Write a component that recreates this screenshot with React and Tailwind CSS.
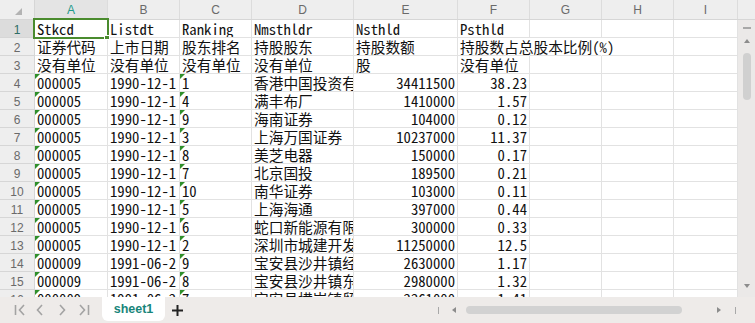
import React from "react";

const cols = [
  { name: "A", w: "w-[73px]" },
  { name: "B", w: "w-[72px]" },
  { name: "C", w: "w-[72px]" },
  { name: "D", w: "w-[102px]" },
  { name: "E", w: "w-[104px]" },
  { name: "F", w: "w-[72px]" },
  { name: "G", w: "w-[72px]" },
  { name: "H", w: "w-[72px]" },
  { name: "I", w: "w-[64px]" },
];

const rows = [
  ["Stkcd", "Listdt", "Ranking", "Nmsthldr", "Nsthld", "Psthld"],
  ["证券代码", "上市日期", "股东排名", "持股股东", "持股数额", "持股数占总股本比例(%)"],
  ["没有单位", "没有单位", "没有单位", "没有单位", "股", "没有单位"],
  ["000005", "1990-12-1", "1", "香港中国投资有限公司", "34411500", "38.23"],
  ["000005", "1990-12-1", "4", "满丰布厂", "1410000", "1.57"],
  ["000005", "1990-12-1", "9", "海南证券", "104000", "0.12"],
  ["000005", "1990-12-1", "3", "上海万国证券", "10237000", "11.37"],
  ["000005", "1990-12-1", "8", "美芝电器", "150000", "0.17"],
  ["000005", "1990-12-1", "7", "北京国投", "189500", "0.21"],
  ["000005", "1990-12-1", "10", "南华证券", "103000", "0.11"],
  ["000005", "1990-12-1", "5", "上海海通", "397000", "0.44"],
  ["000005", "1990-12-1", "6", "蛇口新能源有限公司", "300000", "0.33"],
  ["000005", "1990-12-1", "2", "深圳市城建开发公司", "11250000", "12.5"],
  ["000009", "1991-06-2", "9", "宝安县沙井镇经济发展公司", "2630000", "1.17"],
  ["000009", "1991-06-2", "8", "宝安县沙井镇东塘村", "2980000", "1.32"],
  ["000009", "1991-06-2", "7", "宝安县横岗镇贸易公司", "2261000", "1.41"],
];

function Cell({ w, text, right, mark, spill, hideRight }) {
  return (
    <div
      className={`relative shrink-0 ${w} h-[18px] border-r border-b border-[#e2e2e2] px-[2px] leading-[17px] whitespace-nowrap ${
        spill ? "overflow-visible" : "overflow-hidden"
      } ${right ? "text-right" : ""} ${hideRight ? "border-r-transparent" : ""}`}
    >
      {mark && (
        <div className="absolute left-0 top-0 w-0 h-0 border-t-[5px] border-r-[5px] border-t-[#2f8f2a] border-r-transparent" />
      )}
      {text}
    </div>
  );
}

function Chevron({ dir, bar, className }) {
  return (
    <svg width="12" height="12" viewBox="0 0 12 12" fill="none" stroke="#a3a3a3" strokeWidth="1.6" className={className}>
      {dir === "left" ? (
        <>
          {bar && <line x1="1.5" y1="1" x2="1.5" y2="11" />}
          <polyline points={bar ? "10,1 5.5,6 10,11" : "8,1 3.5,6 8,11"} />
        </>
      ) : (
        <>
          {bar && <line x1="10.5" y1="1" x2="10.5" y2="11" />}
          <polyline points={bar ? "2,1 6.5,6 2,11" : "4,1 8.5,6 4,11"} />
        </>
      )}
    </svg>
  );
}

export default function App() {
  return (
    <div className="w-[755px] h-[323px] flex flex-col bg-white overflow-hidden">
      <div className="flex h-[297px] shrink-0">
        <div className="relative w-[738px] shrink-0 overflow-hidden font-['Noto_Sans_Mono_CJK_SC','Noto_Sans_CJK_SC',monospace] text-[14.7px] text-[#111]">
          {/* column headers */}
          <div className="flex h-[20px] bg-[#eeeeee] border-b border-[#d6d6d6] font-['Liberation_Sans',Arial,sans-serif] text-[12px] text-[#6a6a6a]">
            <div className="w-[35px] shrink-0 border-r border-[#d6d6d6] flex items-center justify-center">
              <svg width="7" height="7" viewBox="0 0 7 7" className="ml-[2px] mt-[3px]">
                <polygon points="7,0 7,7 0,7" fill="#b3b3b3" />
              </svg>
            </div>
            {cols.map((c) => (
              <div
                key={c.name}
                className={`${c.w} shrink-0 border-r border-[#dcdcdc] flex items-center justify-center ${
                  c.name === "A" ? "bg-[#e4e4e4] text-[#1f9a8a]" : ""
                }`}
              >
                {c.name}
              </div>
            ))}
          </div>

          {rows.map((r, ri) => (
            <div key={ri} className="flex">
              <div
                className={`w-[35px] h-[18px] shrink-0 border-r border-b border-[#d6d6d6] flex items-center justify-center pt-[2px] font-['Liberation_Sans',Arial,sans-serif] text-[12px] ${
                  ri === 0 ? "bg-[#dcdcdc] text-[#2f6d66]" : "bg-[#eeeeee] text-[#6a6a6a]"
                }`}
              >
                {ri + 1}
              </div>
              {cols.map((c, ci) => (
                <Cell
                  key={c.name}
                  w={c.w}
                  text={r[ci] || ""}
                  right={ri >= 3 && (ci === 4 || ci === 5)}
                  mark={ri >= 3 && (ci === 0 || ci === 2)}
                  spill={ri === 1 && ci === 5}
                  hideRight={ri === 1 && (ci === 5 || ci === 6)}
                />
              ))}
            </div>
          ))}

          {/* selection A1 */}
          <div className="absolute left-[33px] top-[18px] w-[76px] h-[21px] border-2 border-[#4a8b2e]" />
          <div className="absolute left-[104px] top-[35px] w-[6px] h-[5px] bg-[#4a8b2e] border border-white" />
        </div>

        {/* vertical scrollbar */}
        <div className="w-[17px] shrink-0 flex flex-col">
          <div className="h-[20px] shrink-0 bg-[#eeeeee] border-b border-[#d6d6d6]" />
          <div className="flex-1 bg-[#ebe9e8] flex flex-col items-center">
            <div className="mt-[7px] w-[8px] h-[1.5px] bg-[#a8a8a8]" />
            <svg width="6" height="4" viewBox="0 0 6 4" className="mt-[10px]">
              <polygon points="3,0 6,4 0,4" fill="#8c8c8c" />
            </svg>
            <div className="mt-[10px] w-[8px] h-[47px] rounded-full bg-[#d0d0d0]" />
            <div className="flex-1" />
            <svg width="6" height="4" viewBox="0 0 6 4" className="mb-[9px]">
              <polygon points="0,0 6,0 3,4" fill="#8c8c8c" />
            </svg>
          </div>
        </div>
      </div>

      {/* sheet tabs bar */}
      <div className="flex-1 bg-[#eeebe9] flex items-start">
        <div className="flex items-center h-[26px]">
          <Chevron dir="left" bar className="ml-[14px]" />
          <Chevron dir="left" className="ml-[8px]" />
          <Chevron dir="right" className="ml-[10px]" />
          <Chevron dir="right" bar className="ml-[10px]" />
        </div>
        <div className="ml-[12px] w-[63px] h-[24px] bg-white rounded-b-[6px] flex items-center justify-center font-['Liberation_Sans',Arial,sans-serif] font-bold text-[12.5px] text-[#17857a]">
          sheet1
        </div>
        <div className="ml-[7px] h-[26px] flex items-center">
          <svg width="11" height="11" viewBox="0 0 11 11" stroke="#222" strokeWidth="2">
            <line x1="5.5" y1="0" x2="5.5" y2="11" />
            <line x1="0" y1="5.5" x2="11" y2="5.5" />
          </svg>
        </div>
        <div className="ml-[255px] h-[26px] flex items-center">
          <div className="w-[1px] h-[7px] bg-[#a8a8a8]" />
          <svg width="4" height="6" viewBox="0 0 4 6" className="ml-[13px]">
            <polygon points="4,0 4,6 0,3" fill="#8c8c8c" />
          </svg>
          <div className="ml-[10px] w-[216px] h-[8px] rounded-full bg-[#d2d2d2]" />
          <svg width="4" height="6" viewBox="0 0 4 6" className="ml-[35px]">
            <polygon points="0,0 4,3 0,6" fill="#8c8c8c" />
          </svg>
          <div className="ml-[14px] w-[1px] h-[7px] bg-[#a8a8a8]" />
        </div>
      </div>
    </div>
  );
}
